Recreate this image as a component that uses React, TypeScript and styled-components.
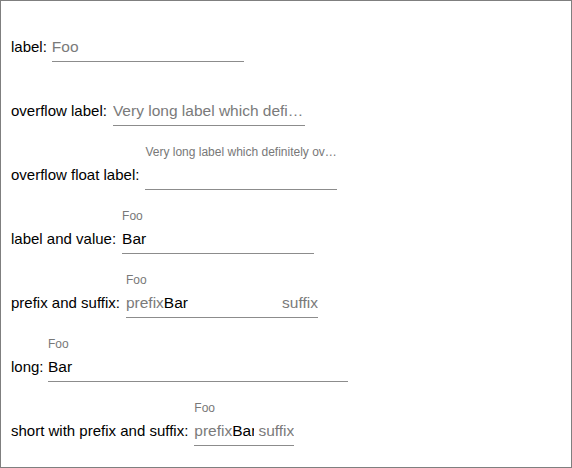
import React from "react";
import styled, { createGlobalStyle } from "styled-components";

const GlobalStyle = createGlobalStyle`
  html, body {
    margin: 0;
    padding: 0;
    background: #ffffff;
  }
  body {
    font-family: "Liberation Sans", Arial, sans-serif;
  }
`;

const Page = styled.div`
  box-sizing: border-box;
  width: 572px;
  height: 468px;
  border: 1px solid #7f7f7f;
  padding: 16px 10px 0;
  display: flex;
  flex-direction: column;
  gap: 19px;
  background: #ffffff;
`;

const Row = styled.div`
  display: flex;
  align-items: flex-end;
`;

const Label = styled.span<{ $gap: number }>`
  font-size: 15px;
  line-height: 18px;
  padding-bottom: 6px;
  margin-right: ${(p) => p.$gap}px;
  color: #000000;
  white-space: nowrap;
`;

const Field = styled.div<{ $width: number }>`
  width: ${(p) => p.$width}px;
  display: flex;
  flex-direction: column;
  flex-shrink: 0;
`;

const FloatLabel = styled.div`
  font-size: 12px;
  line-height: 14px;
  height: 14px;
  margin-bottom: 7px;
  color: #787878;
  white-space: nowrap;
  overflow: hidden;
  text-overflow: ellipsis;
`;

const InputLine = styled.div`
  display: flex;
  font-size: 15.5px;
  line-height: 18px;
  height: 18px;
  padding-bottom: 5px;
  border-bottom: 1px solid #8c8c8c;
  white-space: nowrap;
  overflow: hidden;
`;

const Placeholder = styled.span`
  flex: 1;
  min-width: 0;
  color: #7a7a7a;
  overflow: hidden;
  text-overflow: ellipsis;
`;

const Prefix = styled.span`
  color: #7a7a7a;
  flex-shrink: 0;
`;

const Suffix = styled.span`
  color: #7a7a7a;
  flex-shrink: 0;
  margin-left: auto;
`;

const Value = styled.span<{ $clip?: number }>`
  flex: ${(p) => (p.$clip ? "0 0 auto" : "1")};
  width: ${(p) => (p.$clip ? `${p.$clip}px` : "auto")};
  min-width: 0;
  color: #000000;
  overflow: hidden;
`;

type FieldProps = {
  label: string;
  width?: number;
  gap?: number;
  float?: string;
  placeholder?: string;
  value?: string;
  prefix?: string;
  suffix?: string;
  clip?: number;
};

function FormRow({ label, width = 192, gap = 6, float, placeholder, value, prefix, suffix, clip }: FieldProps) {
  return (
    <Row>
      <Label $gap={gap}>{label}</Label>
      <Field $width={width}>
        <FloatLabel>{float ?? ""}</FloatLabel>
        <InputLine>
          {prefix && <Prefix>{prefix}</Prefix>}
          {placeholder !== undefined ? (
            <Placeholder>{placeholder}</Placeholder>
          ) : (
            <Value $clip={clip}>{value ?? ""}</Value>
          )}
          {suffix && <Suffix>{suffix}</Suffix>}
        </InputLine>
      </Field>
    </Row>
  );
}

export default function App() {
  return (
    <>
      <GlobalStyle />
      <Page>
        <FormRow label="label:" placeholder="Foo" gap={5} />
        <FormRow label="overflow label:" placeholder="Very long label which definitely overflows the field" />
        <FormRow label="overflow float label:" float="Very long label which definitely overflows the field" />
        <FormRow label="label and value:" float="Foo" value="Bar" />
        <FormRow label="prefix and suffix:" float="Foo" value="Bar" prefix="prefix" suffix="suffix" />
        <FormRow label="long:" float="Foo" value="Bar" width={300} gap={4.5} />
        <FormRow
          label="short with prefix and suffix:"
          float="Foo"
          value="Bar"
          prefix="prefix"
          suffix="suffix"
          width={100}
          clip={21.5}
        />
      </Page>
    </>
  );
}
